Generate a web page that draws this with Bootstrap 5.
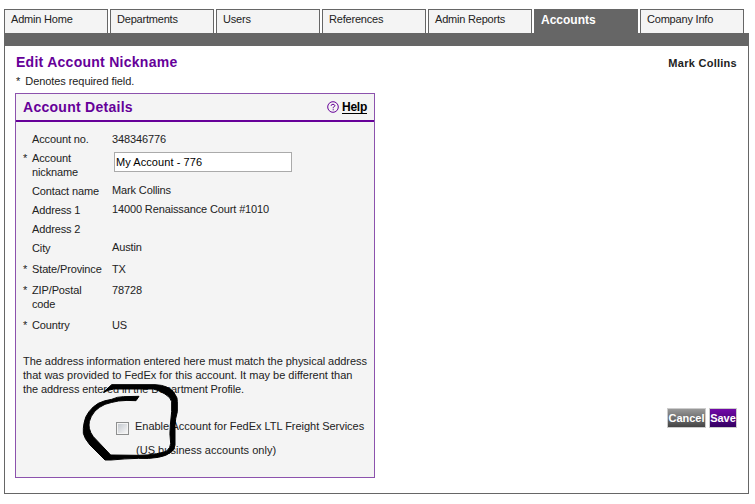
<!DOCTYPE html>
<html lang="en">
<head>
<meta charset="utf-8">
<meta name="viewport" content="width=device-width, initial-scale=1">
<title>Edit Account Nickname</title>
<link href="https://cdn.jsdelivr.net/npm/bootstrap@5.3.0/dist/css/bootstrap.min.css" rel="stylesheet">
<style>
body{font:11px/14px "Liberation Sans",Arial,sans-serif;color:#222;background:#fff;overflow:hidden}
.page{width:745px;margin:9px 0 0 4px}
.tabs{gap:2px;height:24px}
.tabs .nav-link{width:104px;height:24px;padding:2px 6px 0;line-height:14px;letter-spacing:-.2px;color:#222;background:#f4f4f4;border:1px solid #666;border-bottom:0;border-radius:0;white-space:nowrap}
.tabs .nav-link.active{background:#666;color:#fff;font-weight:700;font-size:12px;letter-spacing:0;padding-top:3px}
.bar{height:13px;background:#666}
.frame{height:448px;border:1px solid #666;border-top:0;padding:7px 11px 0 10px}
h1{font-size:14px;line-height:18px;color:#609;font-weight:700;letter-spacing:.27px;padding-left:1px}
h2{font-size:14px;line-height:18px;color:#609;font-weight:700;letter-spacing:.27px}
.user{font-weight:700;line-height:14px;margin-top:3px;letter-spacing:.27px}
.req-note{margin:3px 0 5px 1px}
.req-note span{margin-left:2px;letter-spacing:-.08px}
.panel{width:360px;height:385px;border:1px solid #8c52ad;border-radius:0;background:#f4f4f4;color:#222}
.panel-head{height:28px;border-bottom:2px solid #609;padding:0 7px}
.help{color:#000;font-weight:700;font-size:12px;gap:3px;letter-spacing:-.25px}
.help span{text-decoration:underline;text-underline-offset:2px}
.fields{padding:10px 7px 0;letter-spacing:-.13px}
.field{display:grid;grid-template-columns:9px 80px 1fr;margin-bottom:5px;align-items:start}
.field.wide{margin-bottom:7px}
.field .up{margin-top:-1px}
.field input{width:178px;height:20px;margin:1px 0 -8px 2px;padding:0 1px;border:1px solid #aaa;border-radius:0;font-size:11px;line-height:14px;color:#000;background:#fff;letter-spacing:.07px}
.info{padding:15px 0 0 7px;white-space:nowrap}
.info div:nth-child(1){letter-spacing:-.05px}
.info div:nth-child(3){letter-spacing:-.1px}
.enable{padding:23px 0 0 100px;letter-spacing:-.03px}
.check{appearance:none;width:13px;height:13px;margin:3px 6px 0 0;border:1px solid #8e8f8f;background:linear-gradient(135deg,#c4c9cf,#f6f6f6) center/9px 9px no-repeat #f4f4f4;border-radius:0;flex:none}
.note{padding:8px 0 0 120px;letter-spacing:.03px}
.scribble{left:59px;top:281px;width:115px;height:100px}
.scribble path{stroke:#000;stroke-width:3;stroke-linejoin:round}
.actions{gap:3px;margin-bottom:65px}
.actions .btn{height:20px;padding:0;border:1px solid #ccc;border-radius:0;color:#fff;font-weight:700;font-size:11px;line-height:18px}
.cancel{width:39px;background:linear-gradient(#999,#444)}
.save{width:28px;background:linear-gradient(#7208a8,#340062)}
</style>
<script src="https://cdn.jsdelivr.net/npm/bootstrap@5.3.0/dist/js/bootstrap.bundle.min.js"></script>
</head>
<body>
<div class="page">
  <nav class="nav tabs flex-nowrap">
    <a class="nav-link" href="#">Admin Home</a>
    <a class="nav-link" href="#">Departments</a>
    <a class="nav-link" href="#">Users</a>
    <a class="nav-link" href="#">References</a>
    <a class="nav-link" href="#">Admin Reports</a>
    <a class="nav-link active" href="#">Accounts</a>
    <a class="nav-link" href="#">Company Info</a>
  </nav>
  <div class="bar"></div>
  <main class="frame d-flex justify-content-between">
    <section>
      <h1 class="m-0">Edit Account Nickname</h1>
      <p class="req-note">* <span>Denotes required field.</span></p>
      <div class="card panel position-relative">
        <div class="panel-head d-flex justify-content-between align-items-center">
          <h2 class="m-0">Account Details</h2>
          <a class="help d-flex align-items-center text-decoration-none" href="#">
            <svg width="12" height="12" viewBox="0 0 12 12" fill="none" stroke="#609"><circle cx="6" cy="6" r="5.3"/><path d="M4.2 4.9V4.2L5 3.4h2l.8.8v.9L6.2 6.4v.9M6.2 8.2v1.1"/></svg>
            <span>Help</span>
          </a>
        </div>
        <div class="fields">
          <div class="field"><i></i><span>Account no.</span><span>348346776</span></div>
          <div class="field"><span>*</span><span>Account<br>nickname</span><input type="text" value="My Account - 776"></div>
          <div class="field"><i></i><span>Contact name</span><span class="up">Mark Collins</span></div>
          <div class="field"><i></i><span>Address 1</span><span class="up">14000 Renaissance Court #1010</span></div>
          <div class="field"><i></i><span>Address 2</span><span></span></div>
          <div class="field wide"><i></i><span>City</span><span class="up">Austin</span></div>
          <div class="field wide"><span>*</span><span>State/Province</span><span>TX</span></div>
          <div class="field wide"><span>*</span><span>ZIP/Postal<br>code</span><span>78728</span></div>
          <div class="field wide"><span>*</span><span>Country</span><span>US</span></div>
        </div>
        <div class="info">
          <div>The address information entered here must match the physical address</div>
          <div>that was provided to FedEx for this account. It may be different than</div>
          <div>the address entered in the Department Profile.</div>
        </div>
        <label class="enable d-flex align-items-start"><input class="check" type="checkbox"><span>Enable Account for FedEx LTL Freight Services</span></label>
        <div class="note">(US business accounts only)</div>
        <svg class="scribble position-absolute" viewBox="0 0 345 300"><path d="M85 52L110 29H240Q262 30 275 36Q295 45 300 58Q308 68 307 80V110Q301 130 300 150V210Q298 225 290 230Q275 243 250 247Q220 252 190 250Q150 251 108 255H90L45 210Q28 190 25 175Q24 160 27 145Q30 125 42 110Q54 94 70 85Q88 76 110 73Q127 65 145 65L192 64L183 77Q155 75 130 78Q108 82 90 88Q72 96 60 108Q46 125 43 140Q41 150 43 160Q46 174 55 185L107 240L190 241Q220 241 245 236Q268 232 275 228Q287 218 287 205Q283 175 286 150L290 110V80Q288 68 270 57Q250 45 235 42H115L100 46Z"/></svg>
      </div>
    </section>
    <aside class="d-flex flex-column justify-content-between align-items-end">
      <div class="user">Mark Collins</div>
      <div class="actions d-flex">
        <button class="btn cancel">Cancel</button>
        <button class="btn save">Save</button>
      </div>
    </aside>
  </main>
</div>
</body>
</html>
